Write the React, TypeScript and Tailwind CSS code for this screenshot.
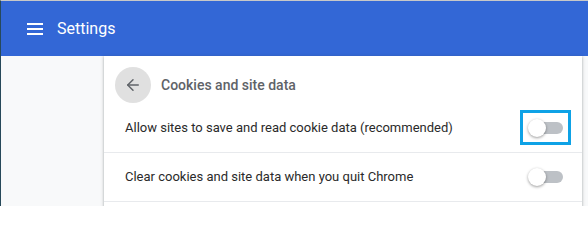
import { ArrowLeft } from "lucide-react";

interface ToggleProps {
  highlighted?: boolean;
}

const Toggle = ({ highlighted = false }: ToggleProps) => {
  return (
    <div className="relative w-[34px] h-[16px] shrink-0">
      <div className="absolute left-0 right-0 top-[2px] h-[12px] rounded-full bg-[#bdc1c6]" />
      <div className="absolute -left-px -top-px w-[18px] h-[18px] rounded-full bg-white shadow-[0_1px_3px_rgba(0,0,0,0.4)]" />
      {highlighted && (
        <div className="absolute -left-[9px] -top-[10px] w-[51px] h-[35px] border-[3px] border-[#0ea2e6]" />
      )}
    </div>
  );
};

const rows = [
  { label: "Allow sites to save and read cookie data (recommended)", highlighted: true },
  { label: "Clear cookies and site data when you quit Chrome", highlighted: false },
];

export default function App() {
  return (
    <div className="w-[588px] h-[206px] overflow-hidden bg-[#f8f9fa] border-t border-t-[#c8c8c8] border-l border-l-[#27495a] font-['Roboto',sans-serif]">
      {/* Toolbar */}
      <div className="h-[55px] bg-[#3367d6] flex items-center pl-[26px]">
        <svg width="16" height="12" viewBox="0 0 16 12" className="shrink-0">
          <rect x="0" y="0" width="16" height="2" fill="white" />
          <rect x="0" y="5" width="16" height="2" fill="white" />
          <rect x="0" y="10" width="16" height="2" fill="white" />
        </svg>
        <span className="ml-[14px] text-[16px] text-white">Settings</span>
      </div>

      {/* Body */}
      <div className="flex h-full">
        <div className="w-[103px] shrink-0" />
        <div className="w-[478px] h-full bg-white shadow-[0_1px_2px_rgba(60,64,67,0.3),0_1px_3px_1px_rgba(60,64,67,0.15)]">
          <div className="h-[48px] flex items-start pt-[11px] pl-[11px]">
            <div className="w-9 h-9 rounded-full bg-[#e0e0e0] flex items-center justify-center">
              <ArrowLeft className="w-[18px] h-[18px] text-[#5f6368]" strokeWidth={2} />
            </div>
            <span className="ml-[10px] h-9 flex items-center text-[14px] font-medium text-[#5f6368]">
              Cookies and site data
            </span>
          </div>
          {rows.map((row) => (
            <div
              key={row.label}
              className="h-[49px] flex items-center justify-between pl-[21px] pr-[19px] border-b border-[#e8eaed]"
            >
              <span className="text-[13px] text-[#2a2a2a]">{row.label}</span>
              <Toggle highlighted={row.highlighted} />
            </div>
          ))}
        </div>
      </div>
    </div>
  );
}
